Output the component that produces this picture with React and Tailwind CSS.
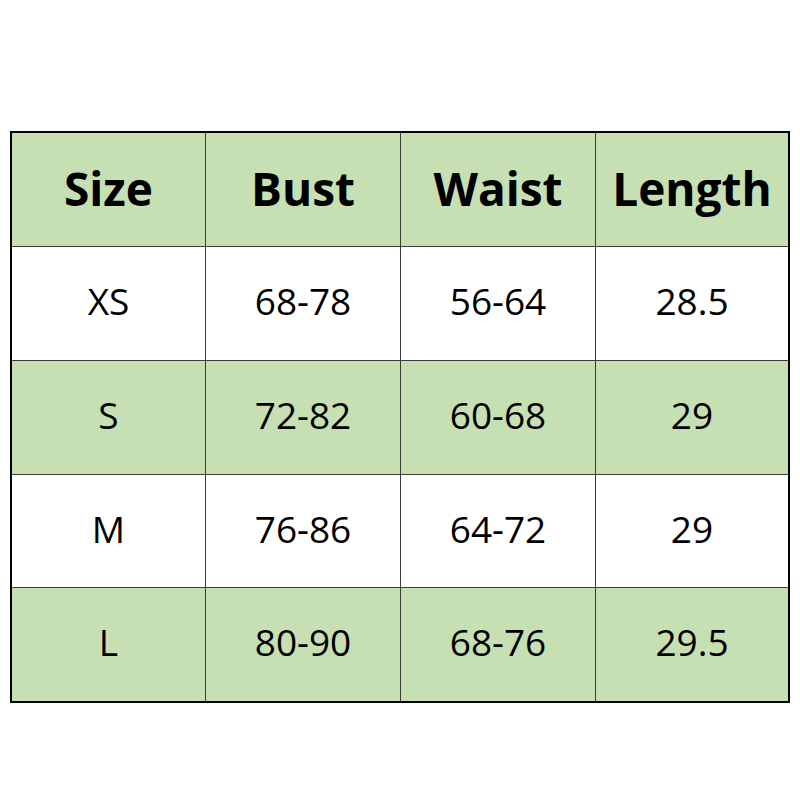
import React from "react";

const header = ["Size", "Bust", "Waist", "Length"];
const rows = [
  ["XS", "68-78", "56-64", "28.5"],
  ["S", "72-82", "60-68", "29"],
  ["M", "76-86", "64-72", "29"],
  ["L", "80-90", "68-76", "29.5"],
];

const heights = ["h-[114px]", "h-[114px]", "h-[114px]", "h-[113px]", "h-[113px]"];

export default function App() {
  const all = [header, ...rows];
  return (
    <div className="w-[800px] h-[800px] bg-white pt-[131px] pl-[10px]" style={{ fontFamily: '"Open Sans", "Noto Sans", sans-serif' }}>
      <div className="w-[780px] border-2 border-black">
        <div className="grid grid-cols-[194px_195px_195px_1fr]">
          {all.map((r, ri) =>
            r.map((c, ci) => {
              const green = ri % 2 === 0;
              const last = ri === all.length - 1;
              return (
                <div
                  key={ri + "-" + ci}
                  className={
                    heights[ri] +
                    " flex items-center justify-center text-black " +
                    (green ? "bg-[#c6e0b4] " : "bg-white ") +
                    (ci < 3 ? "border-r border-[#3a3a3a] " : "") +
                    (!last ? "border-b border-[#3a3a3a] " : "") +
                    (ri === 0 ? "text-[46px] font-bold pb-[2px]" : "text-[37px] pb-[5px]")
                  }
                >
                  {c}
                </div>
              );
            })
          )}
        </div>
      </div>
    </div>
  );
}
